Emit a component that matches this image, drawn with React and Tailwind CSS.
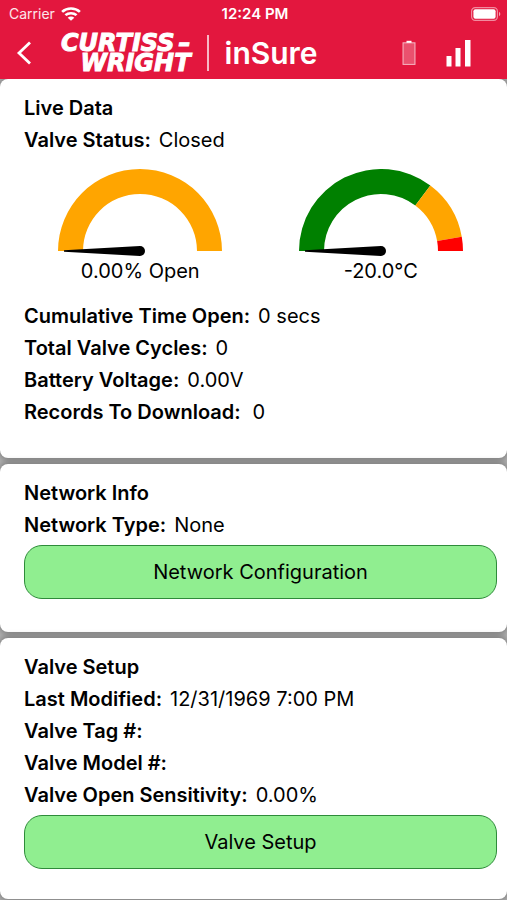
import { useState } from 'react'

const liveReadings = [
  { label: 'Cumulative Time Open:', value: '0 secs' },
  { label: 'Total Valve Cycles:', value: '0' },
  { label: 'Battery Voltage:', value: '0.00V' },
  { label: 'Records To Download:', value: '0', wide: true },
]

const valveReadings = [
  { label: 'Last Modified:', value: '12/31/1969 7:00 PM' },
  { label: 'Valve Tag #:', value: '' },
  { label: 'Valve Model #:', value: '' },
  { label: 'Valve Open Sensitivity:', value: '0.00%' },
]

// Angles run from 180 (left end of the dial) down to 0 (right end)
const openBands = [{ from: 180, to: 0, color: '#ffa500' }]

const temperatureBands = [
  { from: 180, to: 53, color: '#008000' },
  { from: 53, to: 10, color: '#ffa500' },
  { from: 10, to: 0, color: '#ff0000' },
]

const point = (radius, angle) => {
  const rad = (angle * Math.PI) / 180
  return `${82 + radius * Math.cos(rad)} ${82 - radius * Math.sin(rad)}`
}

const bandPath = ({ from, to }) =>
  `M${point(82, from)}A82 82 0 0 1 ${point(82, to)}L${point(57, to)}A57 57 0 0 0 ${point(57, from)}Z`

function Gauge({ bands, caption }) {
  return (
    <figure className="flex flex-col items-center">
      <svg width="164" height="88" viewBox="0 0 164 88" aria-hidden="true">
        {bands.map(band => (
          <path key={band.from} d={bandPath(band)} fill={band.color} />
        ))}
        <path d="M6 81.2 L82 77 A5 5 0 0 1 82 87 L6 82.8 Z" fill="#000" />
      </svg>
      <figcaption className="text-xl leading-7">{caption}</figcaption>
    </figure>
  )
}

function Readings({ items }) {
  return (
    <dl>
      {items.map(item => (
        <div key={item.label} className={`flex ${item.wide ? 'gap-3' : 'gap-2'}`}>
          <dt className="font-semibold">{item.label}</dt>
          <dd>{item.value}</dd>
        </div>
      ))}
    </dl>
  )
}

function Card({ title, className = 'pb-[30px]', children }) {
  return (
    <section
      className={`rounded-lg bg-white pt-[13px] pr-[10px] pl-6 text-xl leading-8 shadow-[0_0_6px_2px_rgba(0,0,0,0.3)] ${className}`}
    >
      <h2 className="font-semibold">{title}</h2>
      {children}
    </section>
  )
}

function ActionButton({ children }) {
  return (
    <button
      type="button"
      className="mt-1 block h-[54px] w-full rounded-[18px] border border-[#2e8b3a] bg-[#90ee90] text-xl"
    >
      {children}
    </button>
  )
}

function StatusBar() {
  return (
    <div className="grid h-7 grid-cols-3 items-center pr-[6px] pl-[9px] text-sm">
      <div className="flex items-center gap-[6px] text-white/90">
        <span>Carrier</span>
        <svg width="20" height="14" viewBox="0 0 18 14" preserveAspectRatio="none" fill="none" stroke="#fff" strokeWidth="2.4">
          <path d="M1 4.8a11.5 11.5 0 0 1 16 0" />
          <path d="M4 8.2a7.2 7.2 0 0 1 10 0" />
          <path d="M9 13.8 6 10.8a4 4 0 0 1 6 0Z" fill="#fff" stroke="none" />
        </svg>
      </div>
      <span className="text-center text-[15px] font-semibold">12:24 PM</span>
      <svg className="justify-self-end" width="30" height="14" viewBox="0 0 30 14" fill="none">
        <rect x="0.6" y="0.6" width="25.8" height="12.8" rx="3.6" stroke="#fff" strokeOpacity="0.5" strokeWidth="1.2" />
        <rect x="2.4" y="2.2" width="22.2" height="9.6" rx="2" fill="#fff" />
        <path d="M28 4.8c1.8.8 1.8 3.6 0 4.4Z" fill="#fff" fillOpacity="0.6" />
      </svg>
    </div>
  )
}

function NavBar({ onBack }) {
  return (
    <div className="flex h-[51px] items-center pr-9 pb-[2px] pl-4">
      <button type="button" aria-label="Back" onClick={onBack} className="mr-7">
        <svg width="17" height="26" viewBox="0 0 17 26" fill="none" stroke="#fff" strokeWidth="2.8">
          <path d="M14 2.5 3 13l11 10.5" />
        </svg>
      </button>
      <div className="flex flex-col items-end font-['DejaVu_Sans',sans-serif] text-2xl leading-5 font-bold whitespace-nowrap italic [-webkit-text-stroke:1px_white]">
        <div className="flex gap-1">
          <span>CURTISS</span>
          <span>–</span>
        </div>
        <div>WRIGHT</div>
      </div>
      <div className="mx-4 h-9 w-[2px] bg-white/70" />
      <h1 className="text-[30px] leading-9 font-semibold">inSure</h1>
      <div className="ml-auto flex items-center gap-[30px]">
        <svg width="14" height="26" viewBox="0 0 14 26" fill="none">
          <rect x="4.5" y="0.8" width="5" height="2" fill="#fff" />
          <rect x="1" y="2.8" width="12" height="21.6" fill="#fff" fillOpacity="0.25" stroke="#fff" strokeOpacity="0.65" />
        </svg>
        <svg width="25" height="28" viewBox="0 0 25 28" fill="#fff">
          <rect x="0.5" y="17" width="5" height="10.5" />
          <rect x="9.5" y="9" width="5" height="18.5" />
          <rect x="19" y="1" width="5.5" height="26.5" />
        </svg>
      </div>
    </div>
  )
}

export default function App() {
  const [open, setOpen] = useState(true)

  return (
    <div className="min-h-screen bg-[#b4b4b4] font-[Inter,sans-serif] text-black">
      <header className="relative z-10 bg-[#e3173e] text-white">
        <StatusBar />
        <NavBar onBack={() => setOpen(!open)} />
      </header>

      {open && (
        <main className="flex flex-col gap-[6px]">
          <Card title="Live Data">
            <Readings items={[{ label: 'Valve Status:', value: 'Closed' }]} />
            <div className="-mx-1 mt-[13px] mb-[15px] grid grid-cols-2">
              <Gauge bands={openBands} caption="0.00% Open" />
              <Gauge bands={temperatureBands} caption="-20.0°C" />
            </div>
            <Readings items={liveReadings} />
          </Card>

          <Card title="Network Info" className="pb-[33px]">
            <Readings items={[{ label: 'Network Type:', value: 'None' }]} />
            <ActionButton>Network Configuration</ActionButton>
          </Card>

          <Card title="Valve Setup">
            <Readings items={valveReadings} />
            <ActionButton>Valve Setup</ActionButton>
          </Card>
        </main>
      )}
    </div>
  )
}
